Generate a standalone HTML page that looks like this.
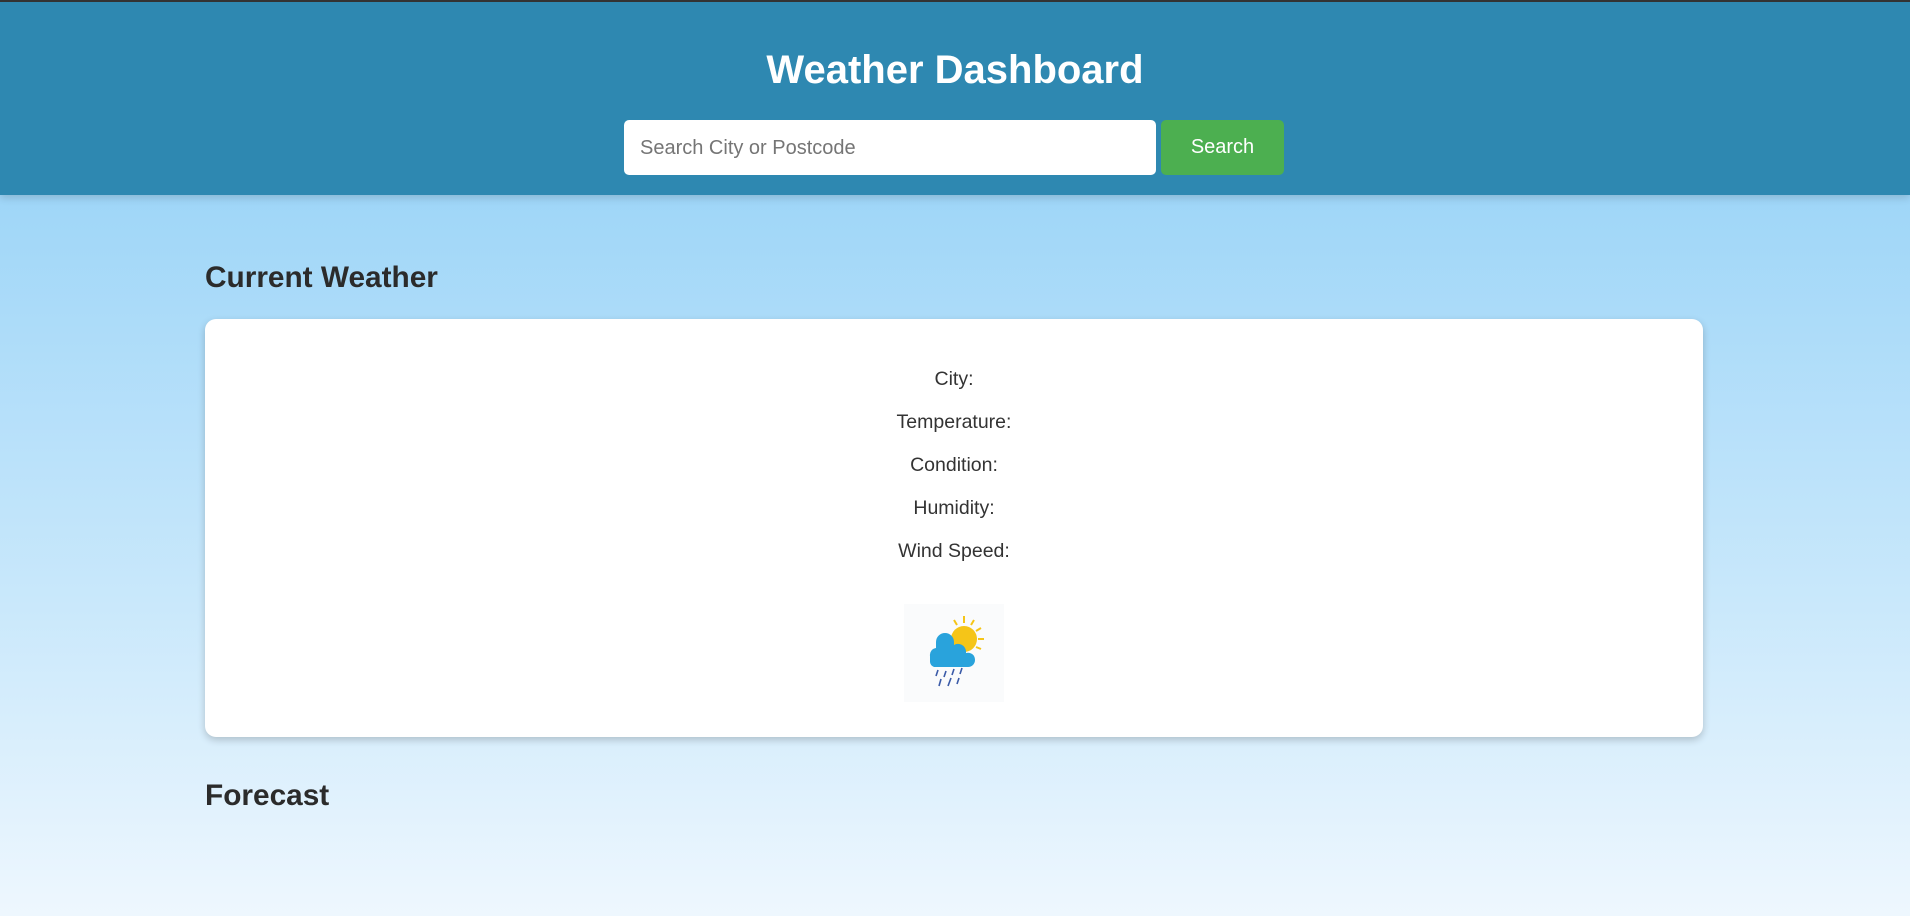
<!DOCTYPE html>
<html><head><meta charset="utf-8"><style>
*{margin:0;padding:0;box-sizing:border-box}
html,body{width:1910px;height:916px;overflow:hidden}
body{font-family:"Liberation Sans",Arial,sans-serif;background:linear-gradient(#9fd6f8 195px,#c9e8fb 600px,#eef7fe 916px);position:relative;color:#333}
.top{position:absolute;left:0;top:0;width:1910px;height:2px;background:#333}
header{position:absolute;left:0;top:1px;width:1910px;height:194px;background:#2e88b1;box-shadow:0 3px 8px rgba(0,0,0,.15)}
h1{position:absolute;left:0;width:1910px;top:47px;text-align:center;color:#fff;font-size:40px;font-weight:bold}
.inp{position:absolute;left:624px;top:119px;width:532px;height:55px;background:#fff;border-radius:5px;font-size:20px;color:#757575;padding:17px 0 0 16px}
.btn{position:absolute;left:1161px;top:119px;width:123px;height:55px;background:#4caf50;border-radius:5px;color:#fff;font-size:20px;text-align:center;line-height:55px}
h2{position:absolute;left:205px;font-size:29.8px;font-weight:bold;color:#2b2b2b}
.card{position:absolute;left:205px;top:319px;width:1498px;height:418px;background:#fff;border-radius:11px;box-shadow:0 3px 8px rgba(0,0,0,.2)}
.l{position:absolute;left:0;width:1498px;text-align:center;font-size:19.5px;color:#333}
</style></head><body>
<header><h1>Weather Dashboard</h1>
<div class="inp">Search City or Postcode</div><div class="btn">Search</div></header>
<div class="top"></div>
<h2 style="top:261px">Current Weather</h2>
<div class="card">
<div class="l" style="top:49px">City:</div>
<div class="l" style="top:92px">Temperature:</div>
<div class="l" style="top:135px">Condition:</div>
<div class="l" style="top:178px">Humidity:</div>
<div class="l" style="top:221px">Wind Speed:</div>
<svg style="position:absolute;left:699px;top:285px" width="100" height="98" viewBox="0 0 100 98">
<rect width="100" height="98" fill="#fafbfc"/>
<g stroke="#f5c518" stroke-width="2"><line x1="60" y1="12" x2="60" y2="19"/><line x1="70" y1="16" x2="67" y2="21"/><line x1="77" y1="24" x2="72" y2="27"/><line x1="80" y1="35" x2="74" y2="35"/><line x1="50" y1="16" x2="53" y2="21"/><line x1="77" y1="45" x2="72" y2="43"/></g>
<circle cx="60" cy="35" r="13" fill="#f5c518"/>
<path d="M30 63 a6 6 0 0 1 -4 -5 v-6 a7 7 0 0 1 6 -8 v-6 a9 9 0 0 1 18 0 v3 a8 8 0 0 1 12 6 v2 a7 7 0 0 1 9 7 a7 7 0 0 1 -7 7 z" fill="#29a3dc"/>
<g stroke="#3b5ba8" stroke-width="1.6"><line x1="34" y1="66" x2="32" y2="72"/><line x1="42" y1="67" x2="40" y2="73"/><line x1="50" y1="65" x2="48" y2="71"/><line x1="58" y1="64" x2="56" y2="70"/><line x1="37" y1="75" x2="35" y2="82"/><line x1="47" y1="74" x2="44" y2="82"/><line x1="55" y1="74" x2="53" y2="80"/></g>
</svg>
</div>
<h2 style="top:779px">Forecast</h2>
</body></html>
